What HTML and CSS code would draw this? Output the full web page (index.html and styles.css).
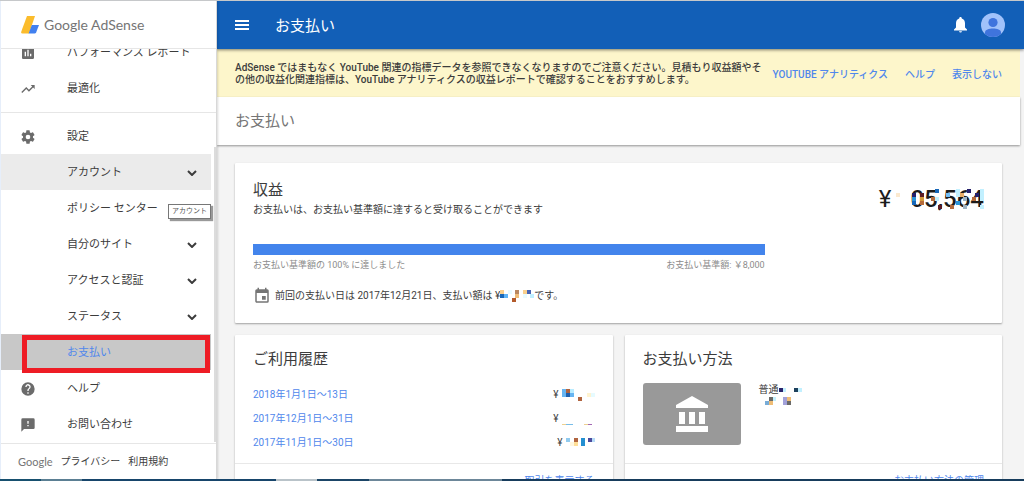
FILE: index.html
```html
<!DOCTYPE html>
<html lang="ja">
<head>
<meta charset="utf-8">
<title>お支払い - Google AdSense</title>
<link rel="stylesheet" href="styles.css">
</head>
<body>
<div class="app">
  <aside class="sidebar">
    <div class="brand">
      <svg class="brand-mark" viewBox="0 0 18 18" aria-hidden="true">
        <path d="M6 0h8L8 17.500H1.500Q-.4 17.500 .3 15.500Z" fill="#fbbc2c"/>
        <path d="M10.800 9H18l-2.800 7.300Q14.700 17.500 13.500 17.500H7.600Z" fill="#4280ef"/>
      </svg>
      <span class="brand-name"><span class="brand-google">Google</span> AdSense</span>
    </div>
    <nav class="menu">
      <a class="item" href="#">
        <svg class="icon" viewBox="0 0 24 24"><path d="M19 3H5a2 2 0 0 0-2 2v14c0 1.100.9 2 2 2h14a2 2 0 0 0 2-2V5a2 2 0 0 0-2-2zM9 17H7v-7h2v7zm4 0h-2V7h2v10zm4 0h-2v-4h2v4z"/></svg>
        <span>パフォーマンス レポート</span></a>
      <a class="item" href="#">
        <svg class="icon" viewBox="0 0 24 24"><path d="M16 6l2.290 2.290-4.880 4.880-4-4L2 16.590 3.410 18l6-6 4 4 6.300-6.290L22 12V6z"/></svg>
        <span>最適化</span></a>
      <hr class="rule">
      <a class="item" href="#">
        <svg class="icon" viewBox="0 0 24 24"><path d="M19.430 12.980c.04-.32.07-.64.07-.98s-.03-.66-.07-.98l2.110-1.650c.19-.15.24-.42.12-.64l-2-3.460c-.12-.22-.39-.3-.61-.22l-2.490 1c-.52-.4-1.080-.73-1.690-.98l-.38-2.650A.49.49 0 0 0 14 2h-4c-.25 0-.46.18-.49.42l-.38 2.650c-.61.25-1.170.59-1.690.98l-2.490-1c-.23-.09-.49 0-.61.22l-2 3.460c-.13.22-.07.49.12.64l2.110 1.650c-.04.32-.07.65-.07.98s.03.66.07.98l-2.110 1.650c-.19.15-.24.42-.12.64l2 3.460c.12.22.39.3.61.22l2.490-1c.52.4 1.080.73 1.690.98l.38 2.650c.03.24.24.42.49.42h4c.25 0 .46-.18.49-.42l.38-2.650c.61-.25 1.170-.59 1.690-.98l2.490 1c.23.09.49 0 .61-.22l2-3.460c.12-.22.07-.49-.12-.64l-2.110-1.650zM12 15.500a3.500 3.500 0 1 1 0-7 3.500 3.500 0 0 1 0 7z"/></svg>
        <span>設定</span></a>
      <a class="item hovered" href="#"><span>アカウント</span><svg class="chevron" viewBox="0 0 10 6"><path d="M1 1l4 4 4-4"/></svg></a>
      <a class="item" href="#"><span>ポリシー センター</span></a>
      <a class="item" href="#"><span>自分のサイト</span><svg class="chevron" viewBox="0 0 10 6"><path d="M1 1l4 4 4-4"/></svg></a>
      <a class="item" href="#"><span>アクセスと認証</span><svg class="chevron" viewBox="0 0 10 6"><path d="M1 1l4 4 4-4"/></svg></a>
      <a class="item" href="#"><span>ステータス</span><svg class="chevron" viewBox="0 0 10 6"><path d="M1 1l4 4 4-4"/></svg></a>
      <a class="item selected" href="#" aria-current="page"><span>お支払い</span></a>
      <a class="item" href="#">
        <svg class="icon" viewBox="0 0 24 24"><path d="M12 2a10 10 0 1 0 0 20 10 10 0 0 0 0-20zm1 17h-2v-2h2v2zm2.070-7.750l-.9.920C13.450 12.900 13 13.500 13 15h-2v-.5c0-1.100.45-2.100 1.170-2.830l1.240-1.260A2 2 0 1 0 10 9H8a4 4 0 1 1 7.070 2.250z"/></svg>
        <span>ヘルプ</span></a>
      <a class="item" href="#">
        <svg class="icon" viewBox="0 0 24 24"><path d="M20 2H4a2 2 0 0 0-2 2v18l4-4h14a2 2 0 0 0 2-2V4a2 2 0 0 0-2-2zm-7 12h-2v-2h2v2zm0-4h-2V6h2v4z"/></svg>
        <span>お問い合わせ</span></a>
      <span class="thumb"></span>
      <span class="tooltip" role="tooltip">アカウント</span>
    </nav>
    <footer class="legal">
      <span class="legal-google">Google</span>
      <a href="#">プライバシー</a>
      <a href="#">利用規約</a>
    </footer>
  </aside>

  <div class="page">
    <header class="topbar">
      <button class="icon-button" type="button" aria-label="メニュー"><svg width="14" height="10" viewBox="0 0 14 10"><path fill="#fff" d="M0 0h14v2H0zM0 4h14v2H0zM0 8h14v2H0z"/></svg></button>
      <h1 class="topbar-title">お支払い</h1>
      <button class="icon-button" type="button" aria-label="通知"><svg width="13" height="16" viewBox="0 0 13 16"><path fill="#fff" d="M6.500 0C7.300 0 7.800.6 7.800 1.400 10 2 11 4 11 6.300V10.500L13 12.500V13.500H0V12.500L2 10.500V6.300C2 4 3 2 5.200 1.400 5.200.6 5.700 0 6.500 0zM5 14.200h3Q7.800 15.600 6.500 15.600T5 14.200z"/></svg></button>
      <button class="icon-button" type="button" aria-label="プロフィール"><svg width="24" height="24" viewBox="0 0 24 24"><clipPath id="round"><circle cx="12" cy="12" r="12"/></clipPath><circle cx="12" cy="12" r="12" fill="#a1c2fa"/><g clip-path="url(#round)" fill="#3f74dd"><circle cx="12" cy="9.500" r="4.600"/><path d="M4 24v-4.500C4 16.500 8 15.500 12 15.500s8 1 8 4V24z"/></g></svg></button>
    </header>

    <main class="content">
      <section class="notice">
        <p class="notice-text">AdSense ではまもなく YouTube 関連の指標データを参照できなくなりますのでご注意ください。見積もり収益額やそ<br>の他の収益化関連指標は、YouTube アナリティクスの収益レポートで確認することをおすすめします。</p>
        <div class="notice-links">
          <a href="#">YOUTUBE アナリティクス</a>
          <a href="#">ヘルプ</a>
          <a href="#">表示しない</a>
        </div>
      </section>
      <h2 class="page-title">お支払い</h2>

      <div class="cards">
        <section class="card earnings">
          <div class="earnings-head">
            <div>
              <h3 class="card-title">収益</h3>
              <p class="text">お支払いは、お支払い基準額に達すると受け取ることができます</p>
            </div>
            <p class="balance"><span>¥</span><span class="masked">05,564
              <svg class="mask" width="88" height="24" viewBox="0 0 88 24" shape-rendering="crispEdges">
                <path fill="#fbe9cf" d="M0 4h4v4H0z"/>
                <path fill="#25206b" d="M16 4h4v4h-4zM71 0h4v4h-4zM79 4h4v4h-4z"/>
                <path fill="#2b93d6" d="M16 8h4v4h-4zM60 12h4v4h-4z"/>
                <path fill="#1767b8" d="M16 12h4v4h-4zM39 0h4v4h-4z"/>
                <path fill="#5c1d25" d="M24 4h4v4h-4zM42 16h4v4h-4z"/>
                <path fill="#d29a3b" d="M24 8h4v4h-4z"/>
                <path fill="#b56a3a" d="M24 12h4v4h-4zM35 8h4v4h-4zM54 16h4v4h-4zM76 8h4v4h-4z"/>
                <path fill="#71bdf5" d="M50 4h4v4h-4z"/>
                <path fill="#c2f0ff" d="M39 8h4v4h-4zM60 0h4v8h-4zM84 0h4v12h-4zM84 16h4v4h-4z"/>
                <path fill="#e8ad68" d="M64 4h4v4h-4z"/>
                <path fill="#9fb3c2" d="M67 16h4v4h-4zM67 8h4v4h-4z"/>
              </svg></span></p>
          </div>
          <div class="threshold">
            <div class="bar" role="progressbar" aria-valuenow="100" aria-label="お支払い基準額"></div>
            <div class="threshold-labels"><span>お支払い基準額の 100% に達しました</span><span>お支払い基準額: ￥8,000</span></div>
          </div>
          <p class="last-payment">
            <svg class="calendar" width="18" height="18" viewBox="0 0 24 24"><path fill="#757575" d="M17 12h-5v5h5v-5zM16 1v2H8V1H6v2H5a2 2 0 0 0-2 2v14c0 1.100.9 2 2 2h14a2 2 0 0 0 2-2V5a2 2 0 0 0-2-2h-1V1h-2zm3 18H5V8h14v11z"/></svg>
            <span>前回の支払い日は 2017年12月21日、支払い額は ¥</span>
            <svg width="34" height="12" viewBox="0 0 34 12" shape-rendering="crispEdges">
              <path fill="#f9cf8c" d="M0 0h4v4H0zM23 0h4v4h-4z"/><path fill="#1967b8" d="M0 4h4v4H0z"/><path fill="#5fb3f5" d="M4 4h4v4H4z"/>
              <path fill="#e9fbff" d="M8 0h4v4H8zM23 4h4v4h-4z"/><path fill="#b98760" d="M15 0h4v4h-4z"/><path fill="#f0bd78" d="M15 4h4v4h-4z"/><path fill="#b35a2b" d="M12 8h4v4h-4z"/><path fill="#4765b5" d="M27 0h4v4h-4z"/><path fill="#bfefff" d="M30 4h4v4h-4z"/>
            </svg>
            <span>です。</span>
          </p>
        </section>

        <section class="card">
          <h3 class="card-title">ご利用履歴</h3>
          <div class="card-body">
            <div class="row"><a href="#">2018年1月1日～13日</a><span class="amount">¥
              <svg width="33" height="12" viewBox="0 0 33 12" shape-rendering="crispEdges"><path fill="#67b5f2" d="M0 0h12v8H0z"/><path fill="#b0643f" d="M4 0h4v4H4zM16 8h4v4h-4z"/><path fill="#1f60ae" d="M4 4h4v4H4z"/><path fill="#b9ecff" d="M8 0h4v4H8z"/><path fill="#fff3d0" d="M25 4h4v4h-4z"/><path fill="#e6fbff" d="M29 4h4v4h-4z"/></svg></span></div>
            <div class="row"><a href="#">2017年12月1日～31日</a><span class="amount">¥
              <svg width="33" height="12" viewBox="0 0 33 12" shape-rendering="crispEdges"><path fill="#eed08f" d="M0 11h4v1H0zM22 11h4v1h-4z"/><path fill="#78bde8" d="M4 11h7v1H4z"/><path fill="#a368b4" d="M26 11h4v1h-4z"/></svg></span></div>
            <div class="row"><a href="#">2017年11月1日～30日</a><span class="amount">¥
              <svg width="29" height="12" viewBox="0 0 29 12" shape-rendering="crispEdges"><path fill="#91cbef" d="M0 1h4v4H0z"/><path fill="#b0643f" d="M8 1h4v4H8z"/><path fill="#ffdf98" d="M8 5h4v4H8z"/><path fill="#fff7df" d="M4 5h4v4H4z"/><path fill="#248fd1" d="M15 1h4v8h-4z"/><path fill="#4b4b9c" d="M22 1h4v4h-4z"/><path fill="#b7dcf8" d="M26 1h3v4h-3z"/></svg></span></div>
          </div>
          <div class="card-actions"><a href="#">取引を表示する</a></div>
        </section>

        <section class="card">
          <h3 class="card-title">お支払い方法</h3>
          <div class="card-body method">
            <div class="bank-tile"><svg width="32" height="36" viewBox="0 0 32 36" fill="#fff"><path d="M16 0l16 9v3H0V9zM3 16h6v12H3zM13 16h6v12h-6zM23 16h6v12h-6zM0 30h32v6H0z"/></svg></div>
            <div class="account">
              <p>普通<svg width="24" height="12" viewBox="0 0 24 12" shape-rendering="crispEdges"><path fill="#29246c" d="M0 4h4v4H0z"/><path fill="#1d405c" d="M15 4h4v4h-4z"/><path fill="#c2f0ff" d="M4 4h3v4H4zM19 4h4v4h-4z"/></svg></p>
              <svg width="36" height="10" viewBox="0 0 36 10" shape-rendering="crispEdges"><path fill="#78acd7" d="M6 4h4v4H6z"/><path fill="#6b6a68" d="M10 0h4v4h-4zM28 4h4v4h-4z"/><path fill="#efbd76" d="M10 4h4v4h-4zM28 0h4v4h-4z"/><path fill="#c2f0ff" d="M14 0h3v4h-3z"/><path fill="#a2a1d9" d="M24 0h4v8h-4z"/></svg>
            </div>
          </div>
          <div class="card-actions"><a href="#">お支払い方法の管理</a></div>
        </section>
      </div>
    </main>
  </div>
</div>
<div class="taskbar"></div>
</body>
</html>
```
FILE: styles.css
```css
* { box-sizing: border-box; }

body {
  margin: 0;
  height: 100vh;
  display: flex;
  flex-direction: column;
  overflow: hidden;
  border-top: 1px solid #c6c8ca;
  background: #f4f4f4;
  color: #3c3c3c;
  font: 10px/20px Roboto, "Noto Sans CJK JP", sans-serif;
}

h1, h2, h3, p { margin: 0; font-weight: 400; }
a { color: #5087ec; text-decoration: none; }
svg { flex: none; }

.app { flex: 1; min-height: 0; display: flex; overflow: hidden; }
.taskbar {
  flex: none;
  height: 2px;
  background: linear-gradient(90deg, #17506f 0 4%, #5b7f93 4% 8%, #17456b 8% 27%, #b9c3c9 27% 31%, #1b4567 31% 36%, #6d8799 36% 49%, #173c5c 49% 100%);
}

/* Sidebar */
.sidebar {
  position: relative;
  z-index: 1;
  flex: none;
  width: 217px;
  display: flex;
  flex-direction: column;
  background: #fff;
  border-left: 1px solid #e6eefa;
  border-right: 1px solid #d8d8d8;
  box-shadow: 1px 0 2px rgba(0, 0, 0, .15);
}
.brand {
  flex: none;
  height: 48px;
  display: flex;
  align-items: center;
  gap: 5px;
  padding-left: 20px;
  border-bottom: 1px solid #e6e6e6;
}
.brand-mark { width: 18px; height: 18px; }
.brand-name { font: 14px/20px Lato, sans-serif; color: #757575; }
.menu {
  position: relative;
  flex: 1;
  min-height: 0;
  overflow: hidden;
  display: flex;
  flex-direction: column;
  justify-content: flex-end;
  padding-bottom: 1px;
}
.item {
  flex: none;
  display: grid;
  grid-template-columns: 46px 1fr auto;
  align-items: center;
  height: 36px;
  margin-right: 5px;
  padding: 2px 14px 0 19px;
  color: #3c3c3c;
  font-size: 11px;
}
.item > span { grid-column: 2; padding-left: 1px; }
.icon { width: 16px; height: 16px; fill: #6b6b6b; }
.chevron { width: 10px; height: 6px; fill: none; stroke: #3c3c3c; stroke-width: 2; }
.hovered { background: #ebebeb; }
.selected {
  position: relative;
  background: #c8c8c8;
  color: #5087ec;
}
.selected::after {
  content: "";
  position: absolute;
  inset: 1px 1px -3px 21px;
  z-index: 1;
  border: 5px solid #ee1c25;
}
.rule {
  flex: none;
  width: 100%;
  margin: 6px 0 5px;
  border: 0;
  border-top: 1px solid #e6e6e6;
}
.thumb {
  position: absolute;
  right: 0;
  top: 98px;
  bottom: 1px;
  width: 2px;
  background: #dcdcdc;
}
.tooltip {
  position: absolute;
  top: 155px;
  right: 5px;
  padding: 0 3px;
  border: 1px solid #777;
  background: #fff;
  box-shadow: 2px 2px 1px #999;
  color: #555;
  font-size: 7px;
  line-height: 13px;
}
.legal {
  flex: none;
  height: 36px;
  display: flex;
  align-items: center;
  gap: 8px;
  padding-left: 17px;
  border-top: 1px solid #e6e6e6;
}
.legal a { color: #3c3c3c; }
.legal-google { font: 11px/20px Lato, sans-serif; color: #757575; }

/* Page */
.page { flex: 1; min-width: 0; display: flex; flex-direction: column; }
.topbar {
  position: relative;
  flex: none;
  height: 48px;
  display: flex;
  align-items: center;
  gap: 14px;
  padding: 0 19px 0 18px;
  background: #125fb7;
  box-shadow: 0 1px 3px rgba(0, 0, 0, .5);
}
.icon-button { display: flex; padding: 0; border: 0; background: none; }
.topbar-title {
  flex: 1;
  padding: 1px 0 0 12px;
  color: #fff;
  font-size: 15px;
}
.content { flex: 1; min-height: 0; margin-right: 4px; }
.notice {
  height: 48px;
  display: flex;
  align-items: center;
  justify-content: space-between;
  padding: 2px 18px 0;
  background: #fdf6cb;
  line-height: 12px;
  white-space: nowrap;
}
.notice-text { font-weight: 500; }
.notice-links { display: flex; gap: 17px; font-weight: 500; padding-top: 2px; }
.page-title {
  padding: 14px 18px;
  background: #fff;
  box-shadow: 0 1px 2px rgba(0, 0, 0, .4);
  color: #757575;
  font-size: 15px;
}

/* Cards */
.cards {
  display: grid;
  grid-template-columns: 1fr 1fr;
  gap: 12px;
  padding: 18px;
}
.card {
  padding: 14px 18px 0;
  background: #fff;
  border-radius: 1px;
  box-shadow: 0 1px 2px rgba(0, 0, 0, .35);
}
.card-title { font-size: 15px; }
.earnings { grid-column: 1 / -1; padding: 17px 18px; }
.earnings-head { display: flex; justify-content: space-between; }
.balance {
  display: flex;
  gap: 19px;
  padding-top: 9px;
  color: #1c1c1c;
  font-size: 24px;
}
.masked { position: relative; font-weight: 500; }
.mask { position: absolute; right: 0; top: 0; }
.threshold { width: 70%; margin-top: 24px; }
.bar { height: 11px; background: #4384ec; }
.threshold-labels {
  display: flex;
  justify-content: space-between;
  color: #8c8c8c;
  font-size: 9px;
}
.last-payment { display: flex; align-items: center; margin-top: 11px; }
.calendar { margin-right: 4px; }
.card-body { height: 80px; margin-top: 14px; }
.row { display: flex; justify-content: space-between; line-height: 24px; }
.amount { display: flex; align-items: center; gap: 3px; }
.method { display: flex; gap: 18px; }
.bank-tile {
  width: 98px;
  height: 62px;
  display: grid;
  place-items: center;
  border-radius: 3px;
  background: #999;
}
.account { line-height: 14px; }
.account p { display: flex; align-items: center; }
.card-actions {
  margin: 0 -18px;
  padding: 5px 18px;
  border-top: 1px solid #e8e8e8;
  line-height: 24px;
  text-align: right;
}
```
